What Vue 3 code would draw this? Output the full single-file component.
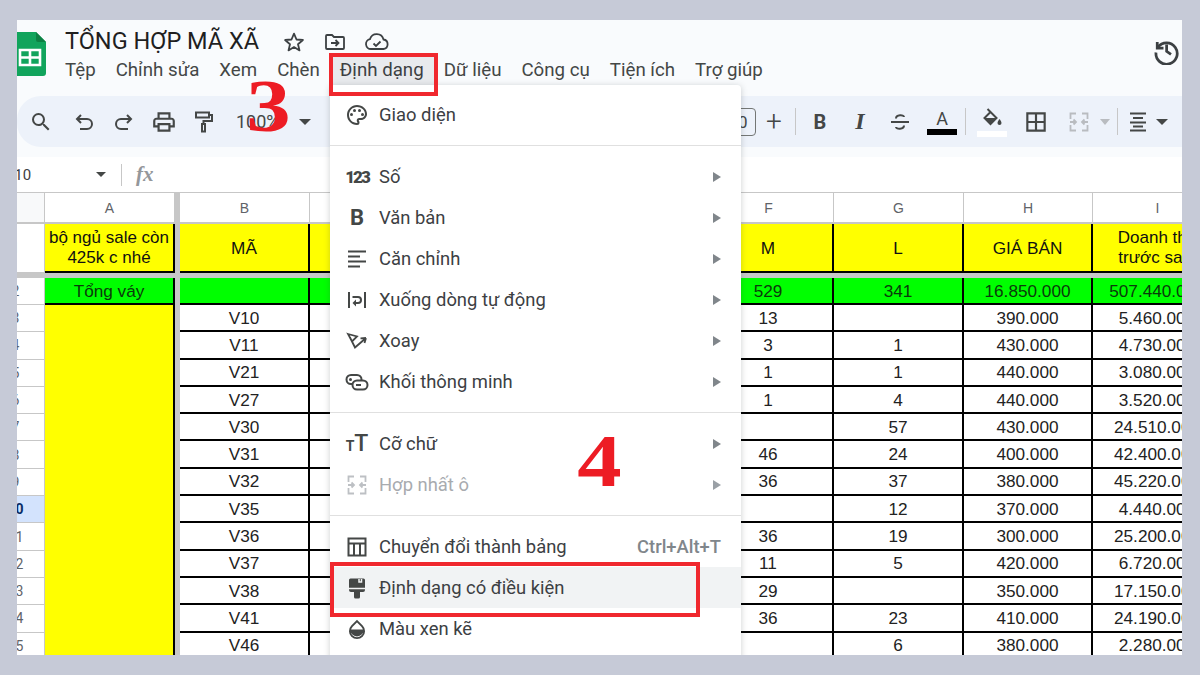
<script setup>
const menus = ['Tệp', 'Chỉnh sửa', 'Xem', 'Chèn', 'Định dạng', 'Dữ liệu', 'Công cụ', 'Tiện ích', 'Trợ giúp']
const rows = [
  ['V10', '13', '', '390.000', '5.460.000'],
  ['V11', '3', '1', '430.000', '4.730.000'],
  ['V21', '1', '1', '440.000', '3.080.000'],
  ['V27', '1', '4', '440.000', '3.520.000'],
  ['V30', '', '57', '430.000', '24.510.000'],
  ['V31', '46', '24', '400.000', '42.400.000'],
  ['V32', '36', '37', '380.000', '45.220.000'],
  ['V35', '', '12', '370.000', '4.440.000'],
  ['V36', '36', '19', '300.000', '25.200.000'],
  ['V37', '11', '5', '420.000', '6.720.000'],
  ['V38', '29', '', '350.000', '17.150.000'],
  ['V41', '36', '23', '410.000', '24.190.000'],
  ['V46', '', '6', '380.000', '2.280.000']
]
const colHeads = ['A', 'B', 'C', 'D', 'E', 'F', 'G', 'H', 'I']
</script>

<template>
  <div class="page">
    <div class="win">
      <header class="head">
        <svg class="logo" viewBox="0 0 32 44" width="32" height="44">
          <path d="M3 0h19l10 10v31a3 3 0 0 1-3 3H3a3 3 0 0 1-3-3V3a3 3 0 0 1 3-3z" fill="#11a45c"/>
          <path d="M22 0l10 10H24a2 2 0 0 1-2-2z" fill="#0c8043"/>
          <path d="M6 18h20v15H6z" fill="none" stroke="#fff" stroke-width="2.6"/>
          <path d="M6 25.500h20M16 18v15" stroke="#fff" stroke-width="2.6"/>
        </svg>
        <div class="titles">
          <div class="title-row">
            <span class="doc">TỔNG HỢP MÃ XÃ</span>
            <svg class="ti-star" viewBox="0 0 24 24" width="24" height="24"><path d="M12 3.600l2.500 5.900 6.400.5-4.900 4.200 1.500 6.200-5.500-3.300-5.500 3.300 1.500-6.200L3.100 10l6.400-.5z" fill="none" stroke="#3c4043" stroke-width="1.800" stroke-linejoin="round"/></svg>
            <svg class="ti-folder" viewBox="0 0 24 24" width="24" height="24"><path d="M3 6a1 1 0 0 1 1-1h5l2 2h9a1 1 0 0 1 1 1v10a1 1 0 0 1-1 1H4a1 1 0 0 1-1-1z" fill="none" stroke="#3c4043" stroke-width="1.800"/><path d="M8 13h7M12.500 10l3 3-3 3" fill="none" stroke="#3c4043" stroke-width="1.800"/></svg>
            <svg class="ti-cloud" viewBox="0 0 26 24" width="26" height="24"><path d="M7 19a5 5 0 0 1-1-9.900A7 7 0 0 1 19.500 9.500 4.800 4.800 0 0 1 19.500 19z" fill="none" stroke="#3c4043" stroke-width="1.800"/><path d="M9.500 13.500l2.500 2.500 4.500-4.500" fill="none" stroke="#3c4043" stroke-width="1.800"/></svg>
          </div>
          <nav class="menubar">
            <span v-for="m in menus" :key="m" class="mb" :class="{ on: m === 'Định dạng' }">{{ m }}</span>
          </nav>
        </div>
        <svg class="hist" viewBox="0 0 24 24" width="30" height="30"><path d="M5 5.500v5h5" fill="none" stroke="#3c4043" stroke-width="2.200"/><path d="M5.500 10A8.500 8.500 0 1 1 4 14" fill="none" stroke="#3c4043" stroke-width="2.200"/><path d="M12.500 7.500V13l3.500 2.500" fill="none" stroke="#3c4043" stroke-width="2.200"/></svg>
      </header>

      <div class="toolbar">
        <div class="tgroup">
          <span class="ti s-search"><svg viewBox="0 0 24 24" width="24" height="24"><path d="M15.500 14h-.79l-.28-.27A6.471 6.471 0 0 0 16 9.500 6.500 6.500 0 1 0 9.500 16c1.610 0 3.090-.59 4.230-1.570l.27.28v.79l5 4.990L20.490 19l-4.990-5zm-6 0C7.010 14 5 11.990 5 9.500S7.010 5 9.500 5 14 7.010 14 9.500 11.990 14 9.500 14z" fill="#444746"/></svg></span>
          <span class="ti"><svg viewBox="0 0 24 24" width="24" height="24"><path d="M9 5L5 9l4 4M5 9h10a4.500 4.500 0 0 1 0 10H8" fill="none" stroke="#444746" stroke-width="2"/></svg></span>
          <span class="ti"><svg viewBox="0 0 24 24" width="24" height="24"><path d="M15 5l4 4-4 4M19 9H9a4.500 4.500 0 0 0 0 10h7" fill="none" stroke="#444746" stroke-width="2"/></svg></span>
          <span class="ti"><svg viewBox="0 0 24 24" width="26" height="26"><path d="M19 8h-1V3H6v5H5c-1.660 0-3 1.340-3 3v6h4v4h12v-4h4v-6c0-1.660-1.340-3-3-3zM8 5h8v3H8V5zm8 14H8v-4h8v4zm4-4h-2v-2H6v2H4v-4c0-.55.45-1 1-1h14c.55 0 1 .45 1 1v4z" fill="#444746"/></svg></span>
          <span class="ti"><svg viewBox="0 0 24 24" width="24" height="24"><path d="M4 2.500h13v5H4zM17 5h3v6h-8.500v3M10 14h3v7.500h-3z" fill="none" stroke="#444746" stroke-width="2"/></svg></span>
          <span class="zoom">100%</span>
          <span class="caret c-zoom"></span>
        </div>
        <div class="tgroup right">
          <span class="sizebox">10</span>
          <span class="ti w36 plus">+</span>
          <span class="vr v-plus"></span>
          <span class="ti let bold">B</span>
          <span class="ti let ital">I</span>
          <span class="ti"><svg viewBox="0 0 24 24" width="24" height="24"><path d="M3 12h18M8 8.500c0-4 8-4 8-1.500M16 15.500c0 4-8 4-8 1.500" fill="none" stroke="#444746" stroke-width="2"/></svg></span>
          <span class="ti color-a"><span class="a-let">A</span><span class="a-bar"></span></span>
          <span class="vr v-fill"></span>
          <span class="ti fill"><svg viewBox="0 0 24 24" width="24" height="24"><path d="M7.500 2l9 9-6 6-6-6 6-6" fill="none" stroke="#444746" stroke-width="2"/><path d="M4.500 11h12l-6 6z" fill="#444746"/><path d="M19.500 12s2 2.500 2 4a2 2 0 0 1-4 0c0-1.500 2-4 2-4z" fill="#444746"/></svg><span class="f-bar"></span></span>
          <span class="ti t-borders"><svg viewBox="0 0 24 24" width="26" height="26"><path d="M4 4h16v16H4zM12 4v16M4 12h16" fill="none" stroke="#444746" stroke-width="2"/></svg></span>
          <span class="ti w34"><svg viewBox="0 0 24 24" width="24" height="24"><path d="M9 3.500H3.500V9M15 3.500h5.500V9M9 20.500H3.500V15M15 20.500h5.500V15M3 12h6M6.500 9.500L9 12l-2.500 2.500M21 12h-6M17.500 9.500L15 12l2.500 2.500" fill="none" stroke="#b9bcc0" stroke-width="1.800"/></svg></span>
          <span class="caret dim w18"></span>
          <span class="vr"></span>
          <span class="ti w34"><svg viewBox="0 0 24 24" width="24" height="24"><path d="M4 3.500h16M7 8h10M4 12.500h16M7 16.500h10M4 20.500h16" stroke="#444746" stroke-width="2"/></svg></span>
          <span class="caret w14"></span>
        </div>
      </div>

      <div class="fbar">
        <span class="namebox">F10</span>
        <span class="caret c-name"></span>
        <span class="fsep"></span>
        <span class="fx">fx</span>
      </div>

      <div class="sheet">
        <span class="vsep"></span>
        <span class="hsep"></span>
        <div class="merged"></div>

        <span class="corner"></span>
        <span v-for="c in colHeads" :key="c" class="colh">{{ c }}</span>

        <span class="rowh">1</span>
        <span class="cell yel wrap">bộ ngủ sale còn 425k c nhé</span>
        <span class="cell yel">MÃ</span>
        <span class="cell yel"></span>
        <span class="cell yel"></span>
        <span class="cell yel"></span>
        <span class="cell yel">M</span>
        <span class="cell yel">L</span>
        <span class="cell yel">GIÁ BÁN</span>
        <span class="cell yel wrap">Doanh thu<br>trước sale</span>

        <span class="rowh">2</span>
        <span class="cell grn">Tổng váy</span>
        <span class="cell grn"></span>
        <span class="cell grn"></span>
        <span class="cell grn"></span>
        <span class="cell grn"></span>
        <span class="cell grn">529</span>
        <span class="cell grn">341</span>
        <span class="cell grn">16.850.000</span>
        <span class="cell grn">507.440.000</span>

        <template v-for="(r, i) in rows" :key="r[0]">
          <span class="rowh" :class="{ sel: i === 7 }">{{ i + 3 }}</span>
          <span class="cell">{{ r[0] }}</span>
          <span class="cell"></span>
          <span class="cell"></span>
          <span class="cell"></span>
          <span class="cell">{{ r[1] }}</span>
          <span class="cell">{{ r[2] }}</span>
          <span class="cell">{{ r[3] }}</span>
          <span class="cell">{{ r[4] }}</span>
        </template>
      </div>

      <!-- open dropdown -->
      <div class="menu">
        <div class="item">
          <svg class="ic" viewBox="0 0 24 24" width="24" height="24"><path d="M12 22C6.490 22 2 17.510 2 12S6.490 2 12 2s10 4.040 10 9c0 3.310-2.690 6-6 6h-1.770c-.28 0-.5.22-.5.5 0 .12.05.23.13.33.41.47.64 1.060.64 1.670A2.500 2.500 0 0 1 12 22zm0-18c-4.410 0-8 3.590-8 8s3.590 8 8 8c.28 0 .5-.22.5-.5a.54.54 0 0 0-.14-.35c-.41-.46-.63-1.050-.63-1.650a2.500 2.500 0 0 1 2.500-2.500H16c2.210 0 4-1.790 4-4 0-3.860-3.590-7-8-7z" fill="#444746"/><circle cx="6.500" cy="11.500" r="1.500" fill="#444746"/><circle cx="9.500" cy="7.500" r="1.500" fill="#444746"/><circle cx="14.500" cy="7.500" r="1.500" fill="#444746"/><circle cx="17.500" cy="11.500" r="1.500" fill="#444746"/></svg>
          <span class="lb">Giao diện</span>
        </div>
        <div class="div"></div>
        <div class="item"><span class="ic t123">123</span><span class="lb">Số</span><i class="arr"></i></div>
        <div class="item"><span class="ic tb">B</span><span class="lb">Văn bản</span><i class="arr"></i></div>
        <div class="item">
          <svg class="ic" viewBox="0 0 24 24" width="24" height="24"><path d="M3 4.500h18M3 9.500h12M3 14.500h18M3 19.500h12" stroke="#444746" stroke-width="1.800"/></svg>
          <span class="lb">Căn chỉnh</span><i class="arr"></i>
        </div>
        <div class="item">
          <svg class="ic" viewBox="0 0 24 24" width="24" height="24"><path d="M4 4v16M20 4v16" stroke="#444746" stroke-width="2"/><path d="M7.500 9H13a3 3 0 0 1 0 6h-3" fill="none" stroke="#444746" stroke-width="2"/><path d="M11 11.500v7l-3.500-3.500z" fill="#444746"/></svg>
          <span class="lb">Xuống dòng tự động</span><i class="arr"></i>
        </div>
        <div class="item">
          <svg class="ic" viewBox="0 0 24 24" width="24" height="24"><path d="M3 5l9 2.500-5 5zM5 8.500l5 10L21 9M21 9l-5.500.4M21 9l-1.500 5" fill="none" stroke="#444746" stroke-width="1.800"/></svg>
          <span class="lb">Xoay</span><i class="arr"></i>
        </div>
        <div class="item">
          <svg class="ic" viewBox="0 0 24 24" width="24" height="24"><rect x="1.500" y="5" width="15" height="9" rx="4.500" fill="none" stroke="#444746" stroke-width="2"/><rect x="7.500" y="10.500" width="15" height="9" rx="4.500" fill="#fff" stroke="#444746" stroke-width="2"/><circle cx="5.500" cy="9.500" r="1.500" fill="#444746"/><path d="M11 15h5" stroke="#444746" stroke-width="2"/></svg>
          <span class="lb">Khối thông minh</span><i class="arr"></i>
        </div>
        <div class="div"></div>
        <div class="item"><span class="ic tt"><small>T</small>T</span><span class="lb">Cỡ chữ</span><i class="arr"></i></div>
        <div class="item off">
          <svg class="ic" viewBox="0 0 24 24" width="24" height="24"><path d="M9 3.500H3.500V9M15 3.500h5.500V9M9 20.500H3.500V15M15 20.500h5.500V15M3 12h6M6.500 9.500L9 12l-2.500 2.500M21 12h-6M17.500 9.500L15 12l2.500 2.500" fill="none" stroke="#bdc0c4" stroke-width="1.800"/></svg>
          <span class="lb">Hợp nhất ô</span><i class="arr"></i>
        </div>
        <div class="div"></div>
        <div class="item">
          <svg class="ic" viewBox="0 0 24 24" width="24" height="24"><path d="M3.500 3.500h17v17h-17zM3.500 8.500h17M9 8.500v12M15 8.500v12" fill="none" stroke="#444746" stroke-width="2"/></svg>
          <span class="lb">Chuyển đổi thành bảng</span><span class="kbd">Ctrl+Alt+T</span>
        </div>
        <div class="item hover">
          <svg class="ic" viewBox="0 0 24 24" width="24" height="24"><path d="M5.500 2.500h13a1.500 1.500 0 0 1 1.500 1.500v10a2 2 0 0 1-2 2h-3v5a1.500 1.500 0 0 1-1.500 1.500h-3A1.500 1.500 0 0 1 9 21v-5H6a2 2 0 0 1-2-2V4a1.500 1.500 0 0 1 1.500-1.500z" fill="#444746"/><path d="M14 3v3h2.500V3M4 12.500h16" fill="none" stroke="#f1f3f4" stroke-width="1.500"/></svg>
          <span class="lb">Định dạng có điều kiện</span>
        </div>
        <div class="item">
          <svg class="ic" viewBox="-4 -3 32 32" width="24" height="24"><path d="M12 2.500l6.700 6.700a9.400 9.400 0 1 1-13.400 0z" fill="none" stroke="#444746" stroke-width="2.600"/><path d="M2.600 13.500h18.800a9.400 9.400 0 0 1-18.800 0z" fill="#444746"/></svg>
          <span class="lb">Màu xen kẽ</span>
        </div>
      </div>

      <!-- annotations -->
      <span class="box box-a"></span>
      <span class="box box-b"></span>
      <span class="num n3">3</span>
      <span class="num n4">4</span>
    </div>
  </div>
</template>

<style>
html, body { margin: 0; background: #c6cad7; }
</style>

<style scoped>
.page {
  width: 1200px;
  height: 675px;
  padding: 20px 18px 20px 17px;
  box-sizing: border-box;
  background: #c6cad7;
  overflow: hidden;
  font-family: Roboto, "Noto Sans", sans-serif;
}
.win {
  position: relative;
  width: 1165px;
  height: 635px;
  overflow: hidden;
  background: #f9fbfd;
  display: flex;
  flex-direction: column;
}
.head {
  height: 76px;
  flex: none;
  display: flex;
  align-items: flex-start;
}
.logo { margin: 12px 0 0 -3px; flex: none; }
.titles { margin-left: 19px; flex: 1; }
.title-row { display: flex; align-items: center; height: 40px; }
.doc { font-size: 23.500px; color: #1f1f1f; margin-top: 1px; }
.ti-star { margin-left: 23px; margin-top: 4px; }
.ti-folder { margin-left: 17px; margin-top: 4px; }
.ti-cloud { margin-left: 17px; margin-top: 4px; }
.menubar { display: flex; margin-left: -10px; margin-top: -4px; }
.mb {
  font-size: 18.700px;
  color: #444746;
  padding: 0 10px;
  height: 30px;
  line-height: 28px;
  white-space: nowrap;
}
.mb.on { background: #e8eaed; color: #3c4043; }
.hist { margin: 15px 1px 0 0; flex: none; }

.toolbar {
  height: 51px;
  flex: none;
  background: #edf2fa;
  border-radius: 24px 0 0 24px;
  display: flex;
  align-items: center;
  justify-content: space-between;
}
.tgroup { display: flex; align-items: center; height: 100%; flex: none; }
.ti {
  width: 40px;
  height: 100%;
  display: flex;
  align-items: center;
  justify-content: center;
  position: relative;
  flex: none;
}
.tgroup:first-child { padding-left: 4px; }
.s-search { margin-right: 3px; }
.zoom { font-size: 18px; color: #444746; margin-left: 12px; width: 48px; }
.caret {
  width: 0; height: 0;
  border-left: 6px solid transparent;
  border-right: 6px solid transparent;
  border-top: 6px solid #444746;
  display: block;
  flex: none;
}
.c-zoom { margin-left: 15px; }
.right { padding-right: 13px; }
.sizebox {
  width: 36px; height: 28px; flex: none;
  border: 1px solid #747775;
  border-radius: 4px;
  font-size: 17px; color: #444746;
  display: flex; align-items: center; justify-content: center;
  box-sizing: border-box;
}
.w36 { width: 36px; }
.w34 { width: 34px; }
.plus { font-size: 28px; font-weight: 300; color: #444746; }
.vr { width: 1px; height: 27px; background: #c7c7c7; margin: 0 3px; flex: none; }
.v-plus { margin-right: 4px; }
.v-fill { margin-right: 6px; }
.t-borders { margin-left: 4px; margin-right: 6px; }
.let { font-size: 20px; color: #444746; }
.bold { font-weight: 700; font-family: Roboto, sans-serif; }
.ital { font-family: "Liberation Serif", serif; font-style: italic; font-weight: 700; font-size: 24px; }
.color-a { flex-direction: column; margin-left: 2px; }
.a-let { font-size: 18px; color: #444746; line-height: 19px; }
.a-bar { width: 30px; height: 6px; background: #000; margin-top: 1px; }
.fill { flex-direction: column; }
.f-bar { width: 30px; height: 6px; background: #fff; }
.w18 { border-left-width: 5px; border-right-width: 5px; border-top-color: #b9bcc0; margin: 0 4px; }
.w14 { margin: 0 1px; }

.fbar {
  margin-top: 10px;
  height: 35px;
  flex: none;
  background: #fff;
  display: flex;
  align-items: center;
}
.namebox { font-size: 15px; color: #3c4043; margin-left: -11px; width: 90px; white-space: nowrap; }
.c-name { border-left-width: 5px; border-right-width: 5px; border-top-width: 5px; }
.fsep { width: 1px; height: 22px; background: #c7c7c7; margin-left: 15px; }
.fx { font-family: "Liberation Serif", serif; font-style: italic; font-weight: 700; font-size: 21px; color: #94979b; margin-left: 14px; }

.sheet {
  flex: none;
  margin-left: -30px;
  display: grid;
  grid-template-columns: 58px 130px 5px 130px 131px 131px 132px 130px 130px 129px 130px;
  grid-template-rows: 31px 49px 5px 27px repeat(13, 27.300px);
  background: #fff;
  border-top: 1px solid #c7c7c7;
  font-family: "Liberation Sans", Arial, sans-serif;
  font-size: 17.200px;
  color: #222;
}
.vsep { grid-column: 3; grid-row: 1 / span 17; background: #c7c7c7; }
.hsep { grid-column: 1 / span 11; grid-row: 3; background: #c7c7c7; }
.merged { grid-column: 2; grid-row: 5 / span 13; background: #ffff00; border-right: 2px solid #000; }
.corner { background: #f8f9fa; border-right: 1px solid #c7c7c7; border-bottom: 2px solid #c7c7c7; }
.colh {
  font-size: 14px;
  color: #5f6368;
  display: flex; align-items: center; justify-content: center;
  border-right: 1.500px solid #c7c7c7;
  border-bottom: 2px solid #c7c7c7;
}
.rowh {
  grid-column: 1;
  font-family: Roboto, sans-serif;
  font-size: 14px;
  color: #5f6368;
  display: flex; align-items: center; justify-content: center;
  border-right: 1px solid #c7c7c7;
  border-bottom: 1px solid #c7c7c7;
}
.rowh.sel { background: #d3e3fd; color: #0b2f66; font-weight: 700; }
.cell {
  display: block;
  align-content: center;
  text-align: center;
  line-height: 20px;
  border-right: 2px solid #000;
  border-bottom: 2px solid #000;
  white-space: nowrap;
  overflow: hidden;
}
.yel { background: #ffff00; color: #111; }
.grn { background: #00ff00; color: #0b3a0b; }
.wrap { white-space: normal; font-size: 17px; line-height: 20px; padding: 0; }

.menu {
  position: absolute;
  left: 313px;
  top: 65px;
  width: 411px;
  height: 580px;
  background: #fff;
  border-radius: 4px 4px 0 0;
  box-shadow: 0 1px 6px rgba(60, 64, 67, .25);
  padding-top: 9px;
  box-sizing: border-box;
}
.item {
  height: 41px;
  display: flex;
  align-items: center;
  position: relative;
  font-size: 18.400px;
  color: #3c4043;
}
.item.hover { background: #f1f3f4; }
.item.off { color: #a8abaf; }
.ic {
  width: 24px;
  margin-left: 15px;
  flex: none;
  text-align: center;
  color: #444746;
}
.lb { margin-left: 10px; white-space: nowrap; }
.t123 { font-family: Roboto, sans-serif; font-weight: 900; font-size: 17px; letter-spacing: -2px; white-space: nowrap; }
.tb { font-family: Roboto, sans-serif; font-weight: 700; font-size: 22px; }
.tt { font-family: Roboto, sans-serif; font-weight: 500; font-size: 23px; letter-spacing: 0; white-space: nowrap; }
.tt small { font-size: 14px; font-weight: 700; }
.arr {
  position: absolute;
  right: 20px;
  width: 0; height: 0;
  border-top: 5px solid transparent;
  border-bottom: 5px solid transparent;
  border-left: 8px solid #80868b;
}
.off .arr { border-left-color: #9aa0a6; }
.kbd { position: absolute; right: 20px; color: #80868b; font-weight: 500; font-size: 18.400px; }
.div { height: 21px; position: relative; }
.div::after { content: ""; position: absolute; left: 0; right: 0; top: 10px; height: 1px; background: #e0e0e0; }

.box { position: absolute; border: 4px solid #f0282e; box-sizing: border-box; pointer-events: none; }
.box-a { left: 312px; top: 33px; width: 109px; height: 43px; }
.box-b { left: 313px; top: 542px; width: 370px; height: 55px; }
.num {
  position: absolute;
  font-family: "Liberation Serif", serif;
  font-weight: 700;
  font-size: 74px;
  line-height: 76px;
  color: #ed1c24;
  transform: scaleX(1.2);
}
.n3 { left: 233px; top: 48px; }
.n4 { left: 564px; top: 403px; }
</style>
